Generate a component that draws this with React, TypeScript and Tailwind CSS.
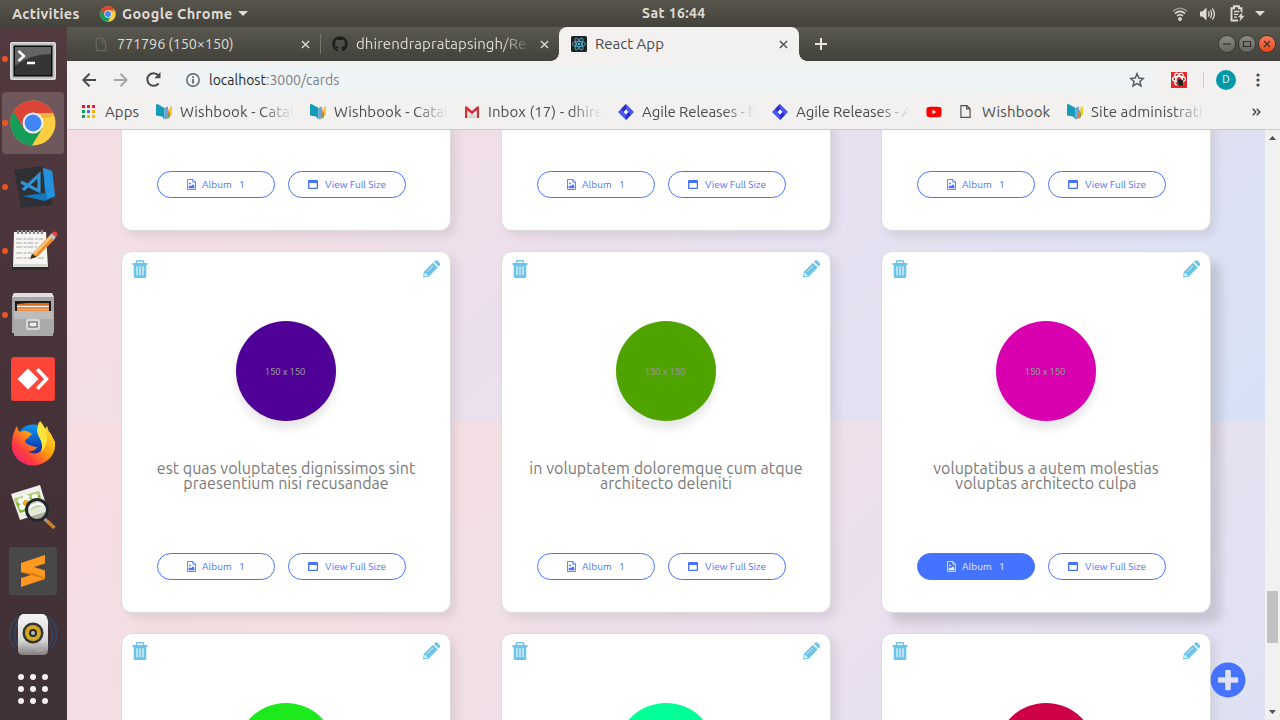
import React from "react";
import { FaGithub, FaPlusCircle, FaYoutube } from "react-icons/fa";

const ChromeLogo = ({ className }: { className: string }) => (
  <svg viewBox="0 0 46 46" className={className}>
    <circle cx="23" cy="23" r="22.5" fill="#ffcd40" />
    <path d="M23 23 L3.5 11.7 A22.5 22.5 0 0 0 22 45.5 L32.5 28 Z" fill="#149c58" />
    <path d="M3.5 11.8 A22.5 22.5 0 0 1 43.3 13 H23 L13.5 28 Z" fill="#dc4437" />
    <path d="M23 13 H43.3 L44.3 16 L26 20 Z" fill="#e9a93a" opacity=".7" />
    <circle cx="23" cy="23" r="10.5" fill="#f3f3f3" />
    <circle cx="23" cy="23" r="8.4" fill="#4286f5" />
  </svg>
);

const FileIcon = ({ className }: { className: string }) => (
  <svg viewBox="0 0 12 16" className={className} fill="none" stroke="currentColor" strokeWidth="1.3">
    <path d="M1 1.5H7.5L11 5V14.5H1Z M7.3 1.5V5.2H11" />
  </svg>
);

const Close = ({ className }: { className: string }) => (
  <svg viewBox="0 0 10 10" className={className} stroke="currentColor" strokeWidth="1.5">
    <path d="M1 1L9 9M9 1L1 9" />
  </svg>
);

const ReactFavicon = () => (
  <svg viewBox="0 0 16 16" className="h-4 w-4 shrink-0" fill="none" stroke="#53c1de" strokeWidth=".8">
    <rect width="16" height="16" rx="1.5" fill="#222" stroke="none" />
    <ellipse cx="8" cy="8" rx="6.6" ry="2.6" />
    <ellipse cx="8" cy="8" rx="6.6" ry="2.6" transform="rotate(60 8 8)" />
    <ellipse cx="8" cy="8" rx="6.6" ry="2.6" transform="rotate(120 8 8)" />
    <circle cx="8" cy="8" r="1" fill="#53c1de" />
  </svg>
);

const WishIcon = () => (
  <svg viewBox="0 0 16 16" className="h-4 w-4 shrink-0">
    <path d="M0 0.5L1.5 0L8.5 4V15.5L6 12.500L0 11.500Z" fill="#149bb8" />
    <path d="M8.500 4L12 2.500V14L8.500 15.500Z" fill="#6aa3d8" />
    <path d="M11.500 7L13.500 5V13L10.500 15.500Z" fill="#f08040" />
    <path d="M13.500 3.500L16 2V11L13.500 12.500Z" fill="#f2cd32" />
    <path d="M12.500 9L14 8V13L12 14.500Z" fill="#6aa84f" />
  </svg>
);

const GmailIcon = () => (
  <svg viewBox="0 0 16 12" className="h-3 w-4 shrink-0">
    <path d="M1 0H15V12H1Z" fill="#ececec" />
    <path d="M3 12L8 7L13 12Z" fill="#d5d5d5" />
    <path d="M1 12V0.5H3L8 5L13 0.5H15V12H12.8V4.2L8 8.2L3.2 4.2V12Z" fill="#da3035" />
  </svg>
);

const JiraIcon = () => (
  <svg viewBox="0 0 16 16" className="h-4 w-4 shrink-0">
    <path d="M8 0L16 8L8 16L0 8Z" fill="#4759f5" />
    <path d="M8 0L8 5.4L5.4 8L3.5 6V4.5Z" fill="#2d2ec9" />
    <path d="M8 16V10.6L10.6 8L12.5 10V11.5Z" fill="#2d2ec9" />
    <path d="M8 5.6L10.4 8L8 10.4L5.6 8Z" fill="#fff" />
  </svg>
);

const AppsIcon = () => (
  <svg viewBox="0 0 13 13" className="h-[13px] w-[13px] shrink-0">
    {["#f5103a", "#f5103a", "#f5103a", "#10a055", "#4573f2", "#fbac08", "#10a055", "#fbac08", "#fbb208"].map((c, i) => (
      <rect key={i} x={(i % 3) * 5} y={Math.floor(i / 3) * 5} width="3" height="3" fill={c} />
    ))}
  </svg>
);

const YouTube = () => <FaYoutube className="h-[18px] w-4 shrink-0 text-[#f00]" />;
const Page = () => <FileIcon className="h-[15px] w-[11px] shrink-0 text-[#505050]" />;

const bookmarks = [
  { Icon: AppsIcon, text: "Apps", cell: "w-[74px]", gap: "gap-[10px]", track: "tracking-[0.1px]", fade: false },
  { Icon: WishIcon, text: "Wishbook - Catal", cell: "w-[154px]", gap: "gap-2", track: "tracking-[0.1px]", fade: true },
  { Icon: WishIcon, text: "Wishbook - Catal", cell: "w-[154px]", gap: "gap-2", track: "tracking-[0.1px]", fade: true },
  { Icon: GmailIcon, text: "Inbox (17) - dhire", cell: "w-[154px]", gap: "gap-2", track: "tracking-[0.1px]", fade: true },
  { Icon: JiraIcon, text: "Agile Releases - b", cell: "w-[154px]", gap: "gap-2", track: "tracking-[-0.1px]", fade: true },
  { Icon: JiraIcon, text: "Agile Releases - A", cell: "w-[154px]", gap: "gap-2", track: "tracking-[-0.1px]", fade: true },
  { Icon: YouTube, text: "", cell: "w-[34px]", gap: "", track: "", fade: false },
  { Icon: Page, text: "Wishbook", cell: "w-[107px]", gap: "gap-[11px]", track: "tracking-[0.2px]", fade: false },
  { Icon: WishIcon, text: "Site administrati", cell: "w-[145px]", gap: "gap-2", track: "tracking-[0.1px]", fade: true },
];

const TopBar = () => (
  <header className="flex h-[27px] shrink-0 items-center bg-gradient-to-b from-[#57544b] to-[#43423c] text-[14.500px] font-semibold text-[#dfdbd2]">
    <span className="w-[88px] pl-3 tracking-[0.3px]">Activities</span>
    <div className="flex w-[554px] items-center pl-3">
      <ChromeLogo className="h-4 w-4" />
      <span className="ml-[6px] w-[116px] whitespace-nowrap tracking-[0.4px]">Google Chrome</span>
      <svg viewBox="0 0 10 5" className="h-[5px] w-[10px]" fill="#dfdbd2"><path d="M0 0H10L5 5Z" /></svg>
    </div>
    <span className="text-[14px] tracking-[0.400px]">Sat 16:44</span>
    <div className="ml-auto flex items-center pr-[15px]">
      <svg viewBox="0 0 16 14" className="h-[14px] w-4" fill="none" stroke="#dfdbd2" strokeWidth="1.6">
        <path d="M1 4.3Q8 -1.8 15 4.3" stroke="#98958c" />
        <path d="M3 6.6Q8 2.2 13 6.6M5 9Q8 6.4 11 9" />
        <circle cx="8" cy="12" r="1.9" fill="#dfdbd2" stroke="none" />
      </svg>
      <svg viewBox="0 0 16 14" className="ml-3 h-[14px] w-4" fill="none" stroke="#dfdbd2" strokeWidth="1.3">
        <path d="M0 4.5H2.5L6.5 0.5V13.5L2.5 9.5H0Z" fill="#dfdbd2" stroke="none" />
        <path d="M8.3 4.5Q9.8 7 8.3 9.5M10.3 3Q13 7 10.3 11M12.3 1.3Q16.6 7 12.3 12.7" />
      </svg>
      <svg viewBox="0 0 15 17" className="ml-[14px] h-[17px] w-[15px]" fill="none" stroke="#dfdbd2" strokeWidth="1.9">
        <path d="M8 15.5H1.5V3.3H4V1.2H9V3.3H11.5V7" />
        <path d="M4 6.5H9.5M4 9.3H8M4 12.2H7" strokeWidth="1.3" />
        <path d="M12.5 7L8 12.3H10.5L9.5 16.5L14.5 10.8H11.7Z" fill="#dfdbd2" stroke="none" />
      </svg>
      <svg viewBox="0 0 10 5" className="ml-[10px] h-[5px] w-[10px]" fill="#dfdbd2"><path d="M0 0H10L5 5Z" /></svg>
    </div>
  </header>
);

const Terminal = () => (
  <svg viewBox="0 0 46 38" className="mt-1 h-[38px] w-[46px]">
    <rect width="46" height="38" rx="2" fill="#dcdcdc" />
    <rect x="1.5" y="1.5" width="43" height="35" rx="1" fill="#bcbcbc" />
    <rect x="3.5" y="3.5" width="39" height="31" fill="#0c0c0c" />
    <rect x="5" y="5" width="36" height="28" fill="#353535" />
    <path d="M5 5H41V12Q20 12 5 24Z" fill="#646464" />
    <path d="M8.5 9L14 14L8.500 19M17 21H25" stroke="#fff" strokeWidth="2.4" fill="none" />
  </svg>
);
const VsCode = () => (
  <svg viewBox="0 0 46 46" className="ml-1 h-[46px] w-[46px]">
    <path d="M2 6L31 2L41 41L9 44Z" fill="#2f2f34" />
    <path d="M31 4L40 7L43 32L34 36Z" fill="#2b97e2" />
    <path d="M31 4L33 29L10 32L33 37L43 32L36 7Z" fill="#1477bd" />
    <path d="M31 4L40 7L43 32L35 35Z" fill="#2491dc" />
    <path d="M9 18L27 27L27 11L11 26" fill="none" stroke="#2f93d6" strokeWidth="3.2" />
  </svg>
);
const Notes = () => (
  <svg viewBox="0 0 46 44" className="ml-1 h-[44px] w-[46px]">
    <path d="M2 6H34L37 41H0Z" fill="#2e2c2c" />
    <path d="M2 3H34L36 38H1Z" fill="#f5f5f2" />
    <path d="M1 35H36V38H1Z" fill="#d9d9d6" />
    <path d="M6 1V5M10 1V5M14 1V5M18 1V5M22 1V5M26 1V5M30 1V5" stroke="#8a8a8a" strokeWidth="2.200" />
    <path d="M4 10H31M4 14H27M4 18H25M4 24H20M4 29H18M26 29H32" stroke="#a9a9a9" strokeDasharray="6 1.5 3 1" />
    <path d="M20 25L37 7L42 11L25 28Z" fill="#f08c2a" />
    <path d="M21 24L38 7L39.5 9L23 26Z" fill="#fbc577" />
    <path d="M20 25L25 28L18 30Z" fill="#3a2a1a" />
    <path d="M37 7L40 4L44 7.500L42 11Z" fill="#c7c7c7" />
    <path d="M39.500 4.500Q42 1 45 3.500Q46.500 6 44 8Z" fill="#e5413f" />
  </svg>
);
const Files = () => (
  <svg viewBox="0 0 42 44" className="h-[44px] w-[42px]">
    <path d="M2 0H40L42 5V40H0V5Z" fill="#a6a6a6" />
    <path d="M2 0H40L42 4H0Z" fill="#e2dfe2" />
    <rect x="3" y="8" width="36" height="11" fill="#1e1a18" />
    <path d="M5 11L15 10H37V19H5Z" fill="#d9701c" />
    <path d="M5 13.500H37" stroke="#fff" strokeWidth="1.3" />
    <path d="M5 16.500H37" stroke="#f3a868" strokeWidth="2" />
    <path d="M2 18H41V43H2Z" fill="#aaa" />
    <path d="M2 18H41V26H2Z" fill="#bcbcbc" />
    <rect x="14" y="26" width="14" height="11" rx="2" fill="#d8d8d8" />
    <rect x="17" y="29" width="8" height="5" fill="#eee" stroke="#555" />
  </svg>
);
const AnyDesk = () => (
  <svg viewBox="0 0 44 44" className="h-11 w-11">
    <rect width="44" height="44" rx="3" fill="#ef4136" />
    <rect x="1" y="1" width="42" height="42" rx="2.5" fill="#ff4538" />
    <path d="M6.500 22L17 11.500L27.500 22L17 32.500Z" fill="#fff" />
    <path d="M25 13.500L27.500 11L38 22L27.500 33L25 30.500L33 22Z" fill="#fff" />
  </svg>
);
const Firefox = () => (
  <svg viewBox="0 0 44 46" className="h-[46px] w-11">
    <defs>
      <linearGradient id="fx" x1="1" y1="0" x2="0" y2="1">
        <stop offset=".1" stopColor="#ffe32d" /><stop offset=".45" stopColor="#ff9a0e" />
        <stop offset=".7" stopColor="#ff3d40" /><stop offset="1" stopColor="#e8168b" />
      </linearGradient>
      <linearGradient id="fb" x1=".5" y1="0" x2=".4" y2="1">
        <stop offset="0" stopColor="#0f9af2" /><stop offset=".5" stopColor="#0a58c9" /><stop offset="1" stopColor="#2d1670" />
      </linearGradient>
    </defs>
    <circle cx="22" cy="21" r="16.5" fill="url(#fb)" />
    <path d="M6 6Q7 11 9 12Q13 9 18 12L21 14L16 19Q12 20 16 24Q22 27 26 27Q24 32 17 31Q24 36 30 31Q35 25 30 18Q24 12 28 2Q31 4 34 9L36 6Q37 11 40 14L44 22Q45 33 37 40Q24 50 10 42Q-1 34 1 21Q2 12 6 6Z" fill="url(#fx)" />
    <path d="M29 1Q24 10 28 17Q33 25 30 32Q37 26 36 17Q35 7 29 1Z" fill="#ffe542" />
  </svg>
);
const Viewer = () => (
  <svg viewBox="0 0 46 46" className="h-[46px] w-[46px]">
    <path d="M1 10L30 1L38 27L10 36Z" fill="#f1f0ec" />
    <path d="M4 15L29 7L33 22L10 29Z" fill="#83b735" />
    <path d="M4 15L29 7L30 11L6 19Z" fill="#b3d175" />
    <g fill="#fff">
      <circle cx="11" cy="17" r="3" /><circle cx="16" cy="14" r="3.2" /><circle cx="20" cy="18" r="3" />
      <circle cx="18" cy="23" r="3.2" /><circle cx="12" cy="23" r="3" /><circle cx="25" cy="13" r="3" /><circle cx="29" cy="17" r="3" />
    </g>
    <circle cx="16" cy="19" r="3" fill="#f3a51c" />
    <circle cx="27" cy="26" r="10.500" fill="#dfe5d5" fillOpacity=".7" stroke="#26292b" strokeWidth="3" />
    <path d="M20 24Q25 18 33 21" stroke="#fff" strokeWidth="2" fill="none" />
    <path d="M34.500 35L38 38" stroke="#999" strokeWidth="3" />
    <path d="M37 37L44.500 44" stroke="#c9832f" strokeWidth="3.600" />
  </svg>
);
const Sublime = () => (
  <svg viewBox="0 0 48 48" className="h-12 w-12">
    <rect width="48" height="48" rx="2.500" fill="#484848" />
    <path d="M12 16L36 8V16.500L25 20L36 23.500V32L12 40V31L22 28L12 25Z" fill="#ff9820" />
    <path d="M12 25L22 28L36 32V31L25 26Z" fill="#dd7c14" />
  </svg>
);
const Speaker = () => (
  <svg viewBox="0 0 48 44" className="h-[44px] w-12">
    <defs>
      <linearGradient id="sp" x1="0" y1="0" x2="0" y2="1">
        <stop offset="0" stopColor="#f4f4f4" /><stop offset=".65" stopColor="#d6d6d6" /><stop offset="1" stopColor="#857d7f" />
      </linearGradient>
    </defs>
    <path d="M8 4Q-6 20 6 36M12 6Q0 20 10 34M40 4Q54 20 42 36M37 6Q49 20 39 34" stroke="#344562" strokeWidth="1.600" fill="none" />
    <path d="M14 1H34Q38 2 39 8V37Q39 42 34 42H14Q9 42 9 37V8Q10 2 14 1Z" fill="url(#sp)" />
    <circle cx="24" cy="20" r="10.500" fill="#33342f" />
    <circle cx="24" cy="20" r="8" fill="#d1a820" />
    <circle cx="24" cy="20" r="4" fill="#2c2c28" />
    <circle cx="24" cy="20" r="2" fill="#bbb" />
    <circle cx="30" cy="34.500" r="3.500" fill="none" stroke="#b5b5b5" />
  </svg>
);
const AppGrid = () => (
  <svg viewBox="0 0 30 30" className="-mt-5 h-[30px] w-[30px]" fill="#f2f1f0">
    {[0, 1, 2, 3, 4, 5, 6, 7, 8].map((i) => (
      <circle key={i} cx={3 + (i % 3) * 12} cy={3 + Math.floor(i / 3) * 12} r="3" />
    ))}
  </svg>
);

const BigChrome = () => <ChromeLogo className="h-[46px] w-[46px]" />;
const dock = [
  { Icon: Terminal, running: true }, { Icon: BigChrome, running: true, active: true },
  { Icon: VsCode, running: true }, { Icon: Notes, running: true }, { Icon: Files, running: true },
  { Icon: AnyDesk }, { Icon: Firefox }, { Icon: Viewer }, { Icon: Sublime }, { Icon: Speaker }, { Icon: AppGrid },
];

const Dock = () => (
  <nav className="flex w-[67px] shrink-0 flex-col gap-0.5 overflow-hidden bg-gradient-to-b from-[#523a3e] via-[#47323a] to-[#3f3135] pt-px pl-0.5">
    {dock.map(({ Icon, running, active }, i) => (
      <div key={i} className={`relative flex h-[62px] w-[62px] shrink-0 items-center justify-center rounded ${active ? "bg-[#6e585c]" : ""}`}>
        {running && <span className="absolute top-[28px] left-0 h-[6px] w-[6px] rounded-full bg-[#e95420]" />}
        <Icon />
      </div>
    ))}
  </nav>
);

const TabStrip = () => (
  <div className="flex h-[34px] items-stretch bg-gradient-to-b from-[#5a5950] to-[#42413b] text-[15px] text-[#dedcd4]">
    <div className="my-[7px] flex w-[254px] items-center border-r border-[#77756c] pl-[28px]">
      <FileIcon className="h-[15px] w-3 text-[#686662]" />
      <span className="ml-[10px] w-[183px] text-[14.500px] tracking-[-0.15px]">771796 (150×150)</span>
      <Close className="ml-px h-[9px] w-[9px]" />
    </div>
    <div className="flex w-[238px] items-center pl-[11px]">
      <FaGithub className="h-4 w-4 shrink-0 text-[#1f1f1f]" />
      <span className="ml-2 w-[176px] overflow-hidden whitespace-nowrap tracking-[0.05px] [mask-image:linear-gradient(to_right,black_82%,transparent)]">dhirendrapratapsingh/Re</span>
      <Close className="ml-2 h-[9px] w-[9px] shrink-0" />
    </div>
    <div className="relative flex w-[240px] items-center rounded-t-lg bg-[#f2f1f0] pl-3 text-[#4a4a4a]">
      <span className="absolute bottom-0 -left-2 h-2 w-2 bg-[radial-gradient(circle_at_0_0,transparent_7.5px,#f2f1f0_8px)]" />
      <span className="absolute -right-2 bottom-0 h-2 w-2 bg-[radial-gradient(circle_at_100%_0,transparent_7.5px,#f2f1f0_8px)]" />
      <ReactFavicon />
      <span className="ml-2 w-[184px]">React App</span>
      <Close className="h-[9px] w-[9px]" />
    </div>
    <svg viewBox="0 0 12 12" className="ml-4 h-3 w-3 self-center" stroke="#e8e6de" strokeWidth="2"><path d="M6 0V12M0 6H12" /></svg>
    <div className="ml-auto flex items-center gap-1 pr-[5px]">
      {[
        { d: "M4 8H12", c: "bg-gradient-to-b from-[#8b8a84] to-[#65645e]" },
        { d: "M4.500 5.500H11.500V10.500H4.500Z", c: "bg-gradient-to-b from-[#8b8a84] to-[#65645e]" },
        { d: "M5 5L11 11M11 5L5 11", c: "bg-gradient-to-b from-[#f77c58] to-[#e9440f]" },
      ].map(({ d, c }) => (
        <span key={d} className={`flex h-4 w-4 items-center justify-center rounded-full shadow-[0_0_0_1px_#3a3934] ${c}`}>
          <svg viewBox="0 0 16 16" className="h-4 w-4" fill="none" stroke="#33322d" strokeWidth="1.200"><path d={d} /></svg>
        </span>
      ))}
    </div>
  </div>
);

const Toolbar = () => (
  <div className="flex h-[37px] items-center bg-[#f2f1f0] pl-[15px] text-[#444]">
    <svg viewBox="0 0 14 14" className="h-[14px] w-[14px]" fill="none" stroke="#4a4a4a" strokeWidth="2"><path d="M14 7H1.500M7.500 .8L1.300 7L7.500 13.200" /></svg>
    <svg viewBox="0 0 14 14" className="ml-[18px] h-[14px] w-[14px]" fill="none" stroke="#a5a5a5" strokeWidth="2"><path d="M0 7H12.500M6.500 .8L12.700 7L6.500 13.200" /></svg>
    <svg viewBox="0 0 15 15" className="ml-[18px] h-[15px] w-[15px]" fill="none" stroke="#4a4a4a" strokeWidth="2"><path d="M12.600 11.300A6.300 6.300 0 1 1 12.300 3.200" /><path d="M14.500 0V6.300H8.200Z" fill="#4a4a4a" stroke="none" /></svg>
    <div className="ml-[14px] flex h-7 w-[980px] items-center rounded-full bg-[#eef3f5] pl-[11px]">
      <svg viewBox="0 0 14 14" className="h-[14px] w-[14px]" fill="none" stroke="#5b5f63" strokeWidth="1.400"><circle cx="7" cy="7" r="6.200" /><path d="M7 6V10.500M7 3.300V4.900" strokeWidth="1.700" /></svg>
      <span className="mt-px ml-[9px] text-[14px] text-[#7c8084]"><span className="text-[#26282a]">localhost</span>:3000/cards</span>
      <svg viewBox="0 0 16 16" className="mr-[10px] ml-auto h-4 w-4" fill="none" stroke="#575b60" strokeWidth="1.500"><path d="M8 1.800L9.800 6.100L14.400 6.500L10.900 9.500L12 14L8 11.600L4 14L5.100 9.500L1.600 6.500L6.200 6.100Z" /></svg>
    </div>
    <svg viewBox="0 0 16 16" className="ml-4 h-4 w-4" fill="none" stroke="#fff" strokeWidth="1.200">
      <rect width="16" height="16" fill="#e2282c" stroke="none" />
      <ellipse cx="8" cy="7" rx="6.500" ry="2.700" /><ellipse cx="8" cy="7" rx="6.500" ry="2.700" transform="rotate(60 8 7)" /><ellipse cx="8" cy="7" rx="6.500" ry="2.700" transform="rotate(120 8 7)" />
      <ellipse cx="9.500" cy="10.500" rx="2.800" ry="3.400" fill="#26201f" stroke="none" transform="rotate(-30 9.500 10.500)" /><path d="M5.500 8L12 14M12.500 8L6 13" stroke="#26201f" strokeWidth=".9" />
    </svg>
    <span className="ml-4 h-4 w-px bg-[#cfcfcf]" />
    <span className="ml-[12px] flex h-5 w-5 items-center justify-center rounded-full bg-[#0097a7] text-[10.500px] text-white">D</span>
    <svg viewBox="0 0 4 14" className="ml-[20px] h-[14px] w-1" fill="#444"><circle cx="2" cy="2" r="1.600" /><circle cx="2" cy="7" r="1.600" /><circle cx="2" cy="12" r="1.600" /></svg>
  </div>
);

const Bookmarks = () => (
  <div className="flex h-8 items-center border-b border-[#cbcac9] bg-[#f2f1f0] pb-1 pl-[15px] text-[15px] leading-5 text-[#4b4b4b]">
    {bookmarks.map(({ Icon, text, cell, gap, track, fade }, i) => (
      <div key={i} className={`flex shrink-0 items-center ${cell} ${gap}`}>
        <Icon />
        {text && (
          <span className={`overflow-hidden whitespace-nowrap ${track} ${fade ? "w-[116px] [mask-image:linear-gradient(to_right,black_70%,transparent_98%)]" : ""}`}>{text}</span>
        )}
      </div>
    ))}
    <svg viewBox="0 0 9 8" className="ml-[40px] h-2 w-[9px]" fill="none" stroke="#444" strokeWidth="1.500"><path d="M.8 .8L3.800 4L.8 7.200M4.800 .8L7.800 4L4.800 7.200" /></svg>
  </div>
);

const Trash = () => (
  <svg viewBox="0 0 16 18" className="h-[18px] w-4">
    <path d="M.5 3H15.500V5H14.300V16.500Q14.300 18 12.800 18H3.200Q1.700 18 1.700 16.500V5H.5Z" fill="#6cc5e8" />
    <path d="M4.500 3.300V1.800Q4.500 .8 5.500 .8H10.500Q11.500 .8 11.500 1.800V3.300" fill="none" stroke="#6cc5e8" strokeWidth="1.500" />
    <path d="M5 6.300V15.300M8 6.300V15.300M11 6.300V15.300" stroke="#e9f7fc" strokeWidth="1.200" />
  </svg>
);
const Pencil = () => (
  <svg viewBox="0 0 18 18" className="h-[17.500px] w-[17.500px]">
    <path d="M0 18L.9 12.200L10.200 2.900L15.100 7.800L5.800 17.100Z" fill="#6cc5e8" />
    <path d="M11.200 1.900L12.600 .6Q13.600 -.3 14.600 .6L17.400 3.400Q18.300 4.400 17.400 5.400L16.100 6.800Z" fill="#6cc5e8" />
    <path d="M2.300 13.500L2.600 15.400L4.600 15.800L3 16.200L1.800 16.200L1.800 15Z M4.300 12L10.300 6" fill="#fff" stroke="#fff" strokeWidth=".7" />
  </svg>
);
const AlbumIcon = () => (
  <svg viewBox="0 0 9 11" className="h-[11px] w-[9px]" fill="none" stroke="currentColor" strokeWidth="1">
    <path d="M.5 .5H6L8.500 3V10.500H.5Z M5.800 .5V3.200H8.500" strokeOpacity=".85" />
    <path d="M1.600 9.200V7.500L3 6.300L4 7.300L6 5.300L7.400 6.700V9.200Z" fill="currentColor" stroke="none" />
    <circle cx="3" cy="4.400" r=".9" fill="currentColor" stroke="none" />
  </svg>
);
const WindowIcon = () => (
  <svg viewBox="0 0 10 9" className="h-[9px] w-[10px]"><path fillRule="evenodd" d="M1 0H9Q10 0 10 1V8Q10 9 9 9H1Q0 9 0 8V1Q0 0 1 0ZM1.300 3V7.700H8.700V3Z" fill="currentColor" /></svg>
);

type CardProps = { color: string; lines: string[]; hovered?: boolean };

const Card = ({ color, lines, hovered }: CardProps) => (
  <article className={`relative flex h-[362px] w-[330px] flex-col rounded-[11px] border border-[#dcdcdc] bg-white ${hovered ? "shadow-[10px_10px_10px_rgba(0,0,0,0.12)]" : "shadow-[5px_5px_10px_rgba(0,0,0,0.08)]"}`}>
    <div className="flex h-[69px] shrink-0 items-start justify-between pt-2 pr-[10px] pl-[10px]">
      <Trash />
      <Pencil />
    </div>
    <div className={`flex h-[100px] w-[100px] shrink-0 items-center justify-center self-center rounded-full shadow-[0_8px_8px_rgba(0,0,0,0.09)] ${color}`}>
      <span className="mt-[3px] -ml-[2px] font-['Roboto',sans-serif] text-[9.500px] tracking-[-0.1px] whitespace-nowrap text-[#969696]">150 x 150</span>
    </div>
    <p className="mt-[40px] flex h-[92px] flex-col items-center text-[16px] leading-[15px] tracking-[0.060px] text-[#797979]">
      {lines.map((l) => <span key={l} className="whitespace-nowrap">{l}</span>)}
    </p>
    <div className="flex gap-[13px] pl-[35px] text-[10px] text-[#4572ff]">
      <button className={`flex h-[27px] w-[118px] items-center rounded-full border border-[#4572ff] pl-[29px] ${hovered ? "bg-[#4572ff] text-[#e8edff]" : ""}`}>
        <AlbumIcon /><span className="ml-[6px] w-[37px] text-left tracking-[0.1px]">Album</span><span>1</span>
      </button>
      <button className="flex h-[27px] w-[118px] items-center rounded-full border border-[#4572ff] pl-[19px]">
        <WindowIcon /><span className="ml-[7px] whitespace-nowrap tracking-[0.030px]">View Full Size</span>
      </button>
    </div>
  </article>
);

const cards: CardProps[] = [
  { color: "bg-[#777]", lines: [] },
  { color: "bg-[#777]", lines: [] },
  { color: "bg-[#777]", lines: [] },
  { color: "bg-[#4f0096]", lines: ["est quas voluptates dignissimos sint", "praesentium nisi recusandae"] },
  { color: "bg-[#4fa300]", lines: ["in voluptatem doloremque cum atque", "architecto deleniti"] },
  { color: "bg-[#d800ae]", lines: ["voluptatibus a autem molestias", "voluptas architecto culpa"], hovered: true },
  { color: "bg-[#1dea1d]", lines: [] },
  { color: "bg-[#00ff97]", lines: [] },
  { color: "bg-[#ce0048]", lines: [] },
];

export default function App() {
  return (
    <div className="flex h-[720px] w-[1280px] flex-col overflow-hidden font-['Ubuntu','Noto_Sans',sans-serif]">
      <TopBar />
      <div className="flex min-h-0 flex-1">
        <Dock />
        <div className="flex min-w-0 flex-1 flex-col">
          <TabStrip />
          <Toolbar />
          <Bookmarks />
          <div className="flex min-h-0 flex-1">
            <main className="relative h-[590px] w-[1198px] overflow-hidden bg-[linear-gradient(135deg,#f6dde2_0%,#f2dfe5_33%,#ebdfed_53%,#dfe1f3_82%,#d6e1f5_100%)] bg-[length:100%_591px] bg-[position:0_-300px]">
              <div className="-mt-[261px] grid grid-cols-[repeat(3,380px)] justify-center justify-items-center gap-y-5">
                {cards.map((c, i) => <Card key={i} {...c} />)}
              </div>
              <FaPlusCircle className="absolute right-[19px] bottom-[22px] h-[36px] w-[36px] text-[#4572ff]" />
            </main>
            <div className="flex w-[15px] flex-col items-center bg-[#f1f1f1] pt-[6px] pb-[6px]">
              <svg viewBox="0 0 7 4" className="h-1 w-[7px]" fill="#505050"><path d="M0 4H7L3.500 0Z" /></svg>
              <div className="mt-[451px] h-[52px] w-[11px] bg-[#c1c1c1]" />
              <svg viewBox="0 0 7 4" className="mt-auto h-1 w-[7px]" fill="#505050"><path d="M0 0H7L3.500 4Z" /></svg>
            </div>
          </div>
        </div>
      </div>
    </div>
  );
}
